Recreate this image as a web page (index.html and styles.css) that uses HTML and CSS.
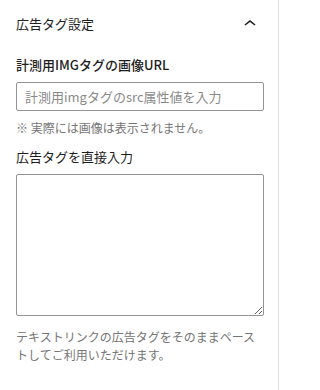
FILE: index.html
```html
<!DOCTYPE html>
<html lang="ja">
<head>
<meta charset="utf-8">
<link rel="stylesheet" href="styles.css">
</head>
<body>
<div class="panel">
  <div class="panel-header">
    <span class="panel-title">広告タグ設定</span>
    <svg class="chevron" width="24" height="24" viewBox="0 0 24 24"><path d="M6.5 12.4L12 8l5.5 4.4-.9 1.2L12 10l-4.6 3.6-1-1.2z" fill="#1e1e1e"/></svg>
  </div>
  <div class="panel-body">
    <label class="label label-strong">計測用IMGタグの画像URL</label>
    <input class="text-input" type="text" placeholder="計測用imgタグのsrc属性値を入力">
    <p class="help help-note">※ 実際には画像は表示されません。</p>
    <label class="label label-second">広告タグを直接入力</label>
    <textarea class="textarea"></textarea>
    <p class="help help-bottom">テキストリンクの広告タグをそのままペーストしてご利用いただけます。</p>
  </div>
</div>
</body>
</html>
```

FILE: styles.css
```css
html, body {
  margin: 0;
  padding: 0;
  background: #ffffff;
}
body {
  font-family: "Noto Sans CJK JP", "Noto Sans", sans-serif;
  color: #1e1e1e;
}
.panel {
  width: 278px;
  min-height: 390px;
  border-right: 1px solid #e0e0e0;
}
.panel-header {
  height: 48px;
  padding: 0 16px;
  display: flex;
  align-items: center;
  justify-content: space-between;
}
.panel-title {
  font-size: 13px;
  line-height: 18px;
  font-weight: 400;
}
.chevron {
  display: block;
}
.panel-body {
  padding: 8px 14px 16px 16px;
  display: flex;
  flex-direction: column;
}
.label {
  display: block;
  font-size: 13px;
  line-height: 18px;
  margin-bottom: 8px;
}
.label-strong {
  font-weight: 500;
}
.label-second {
  margin-top: 11px;
}
.text-input {
  box-sizing: border-box;
  width: 100%;
  height: 29px;
  margin: 0;
  padding: 0 8px;
  border: 1px solid #949494;
  border-radius: 2px;
  font-family: inherit;
  font-size: 13px;
  color: #1e1e1e;
  outline: none;
}
.text-input::placeholder {
  color: #8a8a8a;
}
.help {
  margin: 8px 0 0 0;
  font-size: 12px;
  line-height: 18px;
  color: #757575;
}
.textarea {
  box-sizing: border-box;
  display: block;
  width: 100%;
  height: 142px;
  margin: 0;
  padding: 6px 8px;
  border: 1px solid #949494;
  border-radius: 2px;
  font-family: inherit;
  font-size: 13px;
  resize: vertical;
}
.help-bottom {
  margin-top: 12px;
}
```
